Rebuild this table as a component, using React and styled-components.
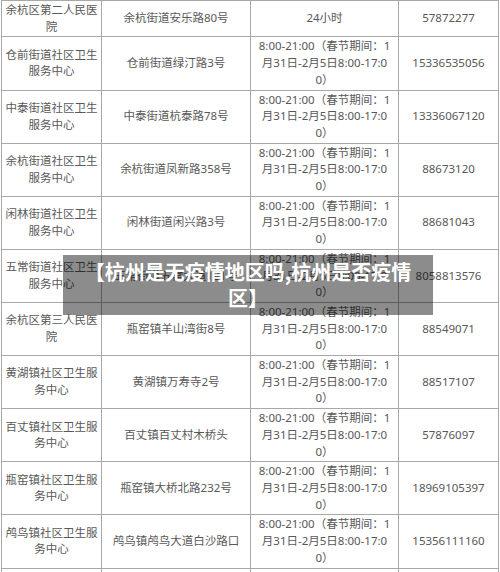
import React from "react";
import styled, { createGlobalStyle } from "styled-components";

const Global = createGlobalStyle`
  html, body { margin: 0; padding: 0; background: #fff; overflow: hidden; }
  body { font-family: "Noto Sans", "Noto Sans CJK SC", sans-serif; }
`;

const Page = styled.div`
  position: relative;
  width: 500px;
  height: 572px;
  overflow: hidden;
  background: #fff;
`;

const Table = styled.table`
  border-collapse: collapse;
  table-layout: fixed;
  width: 497px;
  margin-left: 1px;
  font-size: 11.5px;
  line-height: 16.7px;
  color: #585858;
`;

const Cell = styled.td`
  border: 1px solid #a8a8a8;
  padding: 1px 3px;
  text-align: center;
  vertical-align: middle;
  white-space: nowrap;
  overflow: hidden;
`;

const Line = styled.span`
  display: block;
`;

const Overlay = styled.div`
  position: absolute;
  left: 63px;
  top: 255px;
  width: 370px;
  box-sizing: border-box;
  padding: 4px 15px;
  background: rgba(0, 0, 0, 0.45);
  color: #fff;
  font-family: "Noto Sans CJK SC", sans-serif;
  font-weight: 700;
  font-size: 20px;
  line-height: 26px;
  text-align: center;
`;

const hours = ["8:00-21:00（春节期间：1", "月31日-2月5日8:00-17:0", "0）"];

const rows = [
  [["余杭区第二人民医", "院"], "余杭街道安乐路80号", ["24小时"], "57872277"],
  [["仓前街道社区卫生", "服务中心"], "仓前街道绿汀路3号", hours, "15336535056"],
  [["中泰街道社区卫生", "服务中心"], "中泰街道杭泰路78号", hours, "13336067120"],
  [["余杭街道社区卫生", "服务中心"], "余杭街道凤新路358号", hours, "88673120"],
  [["闲林街道社区卫生", "服务中心"], "闲林街道闲兴路3号", hours, "88681043"],
  [["五常街道社区卫生", "服务中心"], "五常街道五常大道181号", hours, "8058813576"],
  [["余杭区第三人民医", "院"], "瓶窑镇羊山湾街8号", hours, "88549071"],
  [["黄湖镇社区卫生服", "务中心"], "黄湖镇万寿寺2号", hours, "88517107"],
  [["百丈镇社区卫生服", "务中心"], "百丈镇百丈村木桥头", hours, "57876097"],
  [["瓶窑镇社区卫生服", "务中心"], "瓶窑镇大桥北路232号", hours, "18969105397"],
  [["鸬鸟镇社区卫生服", "务中心"], "鸬鸟镇鸬鸟大道白沙路口", hours, "15356111160"],
  [["径山镇社区卫生服", "务中心"], "径山镇径山村", hours, "88591090"],
];

export default function App() {
  return (
    <Page>
      <Global />
      <Table>
        <colgroup>
          <col style={{ width: 100 }} />
          <col style={{ width: 149 }} />
          <col style={{ width: 148 }} />
          <col style={{ width: 100 }} />
        </colgroup>
        <tbody>
          {rows.map((r, i) => (
            <tr key={i}>
              <Cell>
                {r[0].map((l, j) => (
                  <Line key={j}>{l}</Line>
                ))}
              </Cell>
              <Cell>{r[1]}</Cell>
              <Cell>
                {r[2].map((l, j) => (
                  <Line key={j}>{l}</Line>
                ))}
              </Cell>
              <Cell>{r[3]}</Cell>
            </tr>
          ))}
        </tbody>
      </Table>
      <Overlay>【杭州是无疫情地区吗,杭州是否疫情区】</Overlay>
    </Page>
  );
}
